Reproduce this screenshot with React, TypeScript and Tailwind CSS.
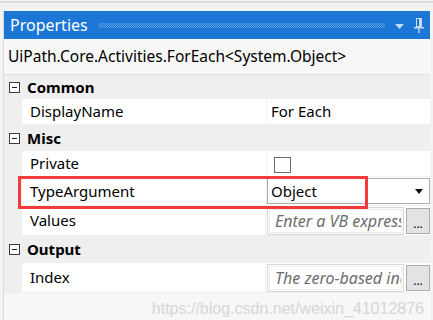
import type { ReactNode } from "react";

function MinusBox() {
  return (
    <span className="w-[11px] h-[11px] border border-[#3c3c3c] bg-white flex items-center justify-center shrink-0">
      <span className="w-[5px] h-px bg-[#1e1e1e]" />
    </span>
  );
}

function Category({ label, h }: { label: string; h: string }) {
  return (
    <div className={`flex items-center shrink-0 bg-[#efefef] ${h}`}>
      <div className="w-[18px] flex justify-end pr-[2px] pl-[4px]">
        <MinusBox />
      </div>
      <span className="pl-[5px] font-bold text-[15px] text-black">{label}</span>
    </div>
  );
}

function Row({ name, h, children }: { name: string; h: string; children?: ReactNode }) {
  return (
    <div className={`flex shrink-0 ${h}`}>
      <div className="w-[18px] bg-[#efefef] shrink-0" />
      <div className="w-[245px] bg-white flex items-center pl-[8px] border-b border-[#f0f0f0] border-r text-[15px] text-black">
        {name}
      </div>
      <div className="flex-1 bg-white flex items-center border-b border-[#f0f0f0]">{children}</div>
    </div>
  );
}

function ExprBox({ placeholder }: { placeholder: string }) {
  return (
    <div className="flex items-center w-full pl-[1px] gap-[2px]">
      <div className="w-[137px] h-[28px] border border-[#d6d6d6] p-px">
        <div className="h-full border border-[#ececec] bg-white flex items-center pl-[5px] overflow-hidden whitespace-nowrap">
          <span className="italic text-[16px] text-[#6d6d6d]">{placeholder}</span>
        </div>
      </div>
      <div className="w-[24px] h-[26px] bg-[#e3e3e3] border border-[#acacac] flex items-end justify-center pb-[3px] text-[12px] leading-none text-black">
        ...
      </div>
    </div>
  );
}

function Pin() {
  return (
    <svg width="10" height="15" viewBox="0 0 10 15" className="text-[#c4dbf5]">
      <rect x="2.5" y="0.5" width="5" height="8" fill="none" stroke="currentColor" />
      <rect x="5" y="1" width="2" height="7" fill="currentColor" />
      <rect x="0" y="9" width="10" height="1.5" fill="currentColor" />
      <rect x="4.3" y="10.5" width="1.4" height="4.5" fill="currentColor" />
    </svg>
  );
}

export default function App() {
  return (
    <div className="w-[433px] h-[320px] bg-[#f3f3f3] overflow-hidden relative font-['Noto_Sans',_sans-serif]">
      <div className="h-[11px] pt-px">
        <div className="h-[2px] bg-[#dcdcdc]" />
      </div>

      <div className="ml-[3px] mr-[3px] border-l border-[#dadada] h-[309px] flex flex-col bg-[#f7f7f7]">
        <div className="h-[28px] shrink-0 bg-[#1b76d6] flex items-center pl-[6px] pr-[6px]">
          <span className="text-white text-[16px]">Properties</span>
          <div className="ml-[10px] w-[290px] h-[5px] bg-[repeating-conic-gradient(#5a9be3_0_25%,transparent_0_50%)] bg-[length:2px_2px]" />
          <svg width="9" height="5" viewBox="0 0 9 5" className="ml-[10px] mt-[2px]">
            <path d="M0 0 L9 0 L4.5 5 Z" fill="#c4dbf5" />
          </svg>
          <div className="ml-[10px]">
            <Pin />
          </div>
        </div>

        <div className="h-[36px] shrink-0 flex items-center pl-[4px] border-b border-[#e3e3e3] text-[15.5px] text-black">
          UiPath.Core.Activities.ForEach&lt;System.Object&gt;
        </div>

        <Category label="Common" h="h-[24px]" />
        <Row name="DisplayName" h="h-[26px]">
          <span className="pl-[4px] text-[15px] text-black">For Each</span>
        </Row>
        <Category label="Misc" h="h-[26px]" />
        <Row name="Private" h="h-[26px]">
          <span className="ml-[7px] mt-[2px] w-[17px] h-[16px] border border-[#6f6f6f] bg-white" />
        </Row>
        <Row name="TypeArgument" h="h-[29px]">
          <div className="w-full h-[26px] border border-[#acacac] bg-white flex items-center pl-[3px] pr-[6px] text-[15px] text-black">
            <span className="flex-1">Object</span>
            <svg width="8" height="5" viewBox="0 0 8 5">
              <path d="M0 0 L8 0 L4 5 Z" fill="#111" />
            </svg>
          </div>
        </Row>
        <Row name="Values" h="h-[30px]">
          <ExprBox placeholder="Enter a VB expression" />
        </Row>
        <Category label="Output" h="h-[27px]" />
        <Row name="Index" h="h-[30px]">
          <ExprBox placeholder="The zero-based index" />
        </Row>

        <div className="h-[27px] shrink-0 flex items-center justify-end pr-[6px] pt-[4px]">
          <span className="font-['Liberation_Sans',_sans-serif] text-[16px] text-[#d6d6d6]">
            https://blog.csdn.net/weixin_41012876
          </span>
        </div>
      </div>

      <div className="absolute left-[18px] top-[176px] w-[350px] h-[33px] border-[3px] border-[#f03c3c]" />
    </div>
  );
}
